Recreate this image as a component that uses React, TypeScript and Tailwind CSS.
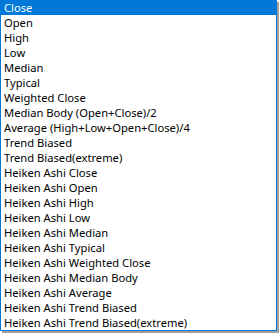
import React from "react";

const items = [
  "Close",
  "Open",
  "High",
  "Low",
  "Median",
  "Typical",
  "Weighted Close",
  "Median Body (Open+Close)/2",
  "Average (High+Low+Open+Close)/4",
  "Trend Biased",
  "Trend Biased(extreme)",
  "Heiken Ashi Close",
  "Heiken Ashi Open",
  "Heiken Ashi High",
  "Heiken Ashi Low",
  "Heiken Ashi Median",
  "Heiken Ashi Typical",
  "Heiken Ashi Weighted Close",
  "Heiken Ashi Median Body",
  "Heiken Ashi Average",
  "Heiken Ashi Trend Biased",
  "Heiken Ashi Trend Biased(extreme)",
];

export default function App() {
  return (
    <div className="w-[280px] h-[333px] bg-white relative overflow-hidden">
      <div className="w-[277px] h-[331px] border-l border-r border-b border-[#0078d7] bg-white shadow-[2px_2px_0_0_#a0a0a0] flex flex-col">
        {items.map((it, i) => (
          <div
            key={it}
            className={
              "h-[15px] leading-[15px] pl-[3px] text-[11.2px] whitespace-nowrap " +
              (i === 0 ? "bg-[#0078d7] text-white" : "text-black")
            }
            style={{ fontFamily: '"Noto Sans", "Open Sans", sans-serif' }}
          >
            {it}
          </div>
        ))}
      </div>
    </div>
  );
}
